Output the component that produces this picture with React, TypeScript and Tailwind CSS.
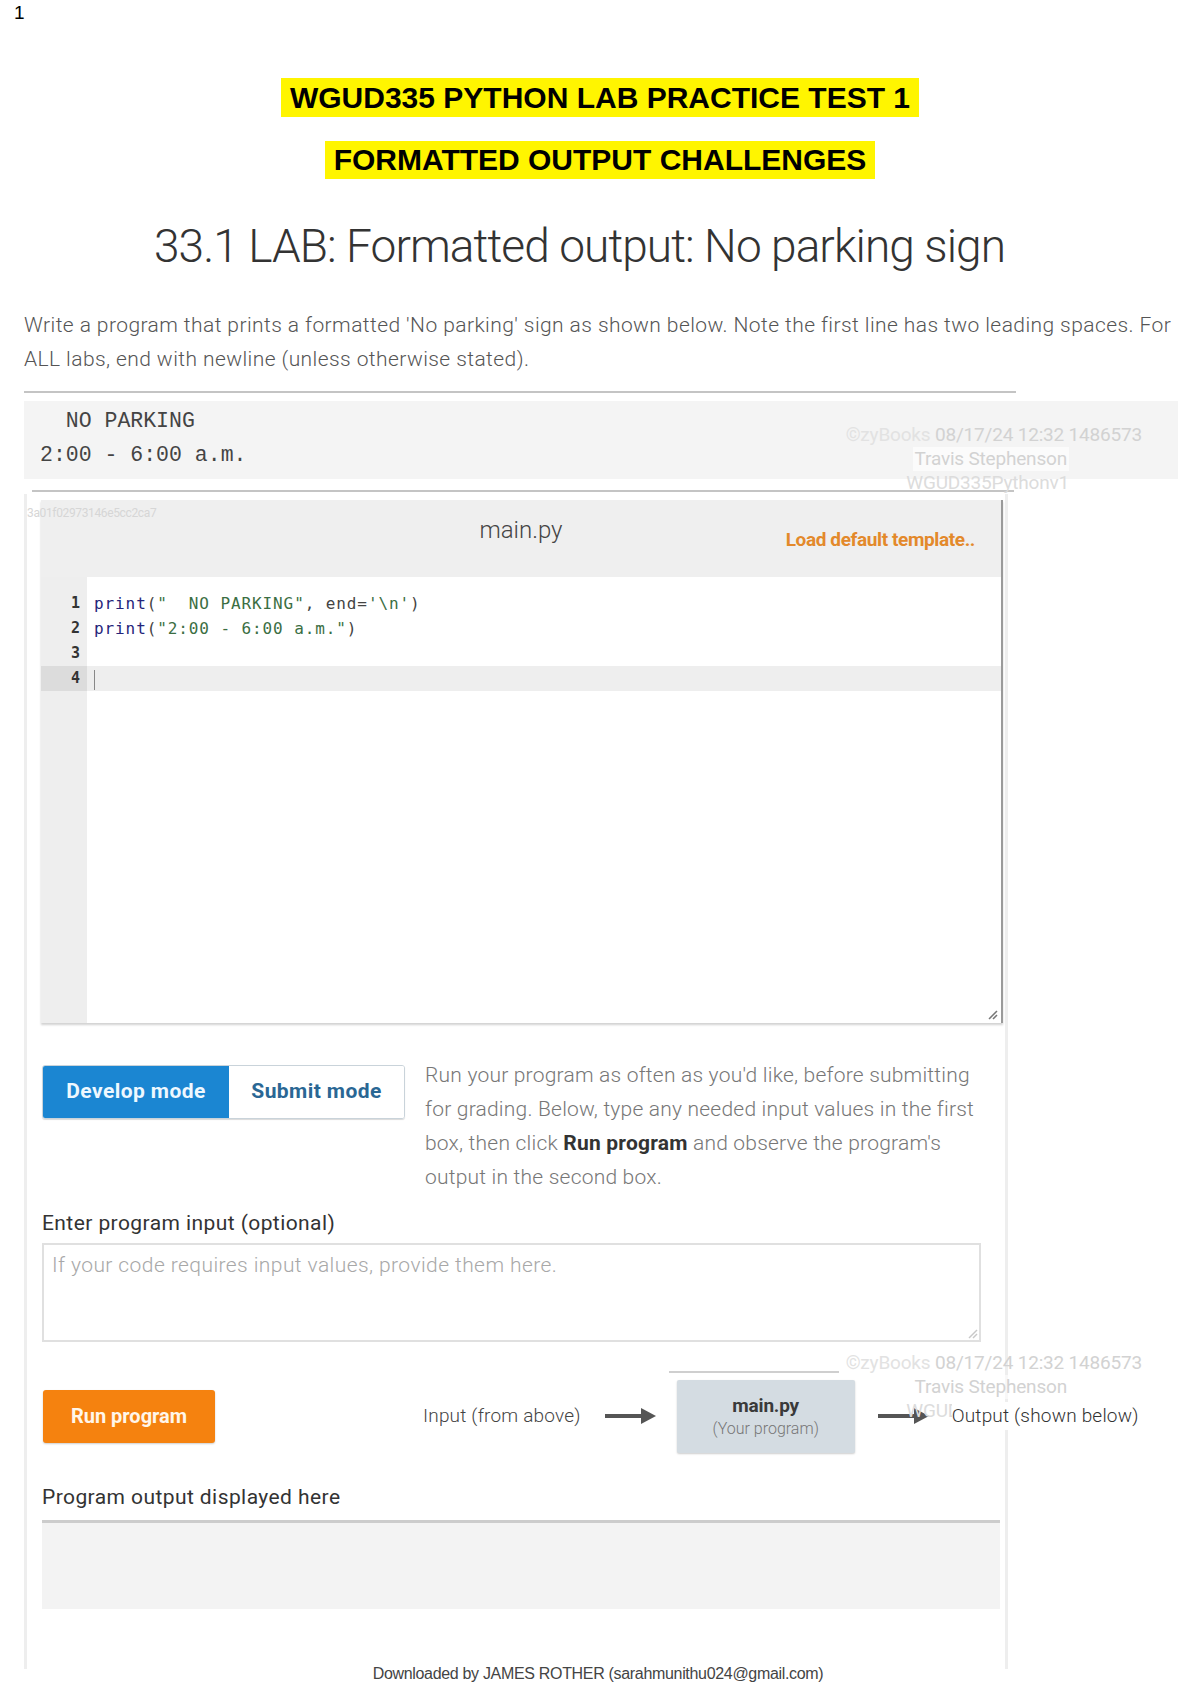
import React from "react";

function Arrow() {
  return (
    <svg width="52" height="20" viewBox="0 0 52 20" className="shrink-0">
      <line x1="0" y1="10" x2="38" y2="10" stroke="#555" strokeWidth="4" />
      <polygon points="36,2 51,10 36,18" fill="#555" />
    </svg>
  );
}

function ResizeGrip() {
  return (
    <svg width="12" height="12" viewBox="0 0 12 12">
      <line x1="11" y1="3" x2="3" y2="11" stroke="#777" strokeWidth="1.5" />
      <line x1="11" y1="7" x2="7" y2="11" stroke="#777" strokeWidth="1.5" />
    </svg>
  );
}

function Watermark({ top }: { top: number }) {
  // zyBooks overlay stamp; only the top offset differs between the two copies
  return (
    <div
      className="absolute left-[836px] w-[306px] flex flex-col items-end pointer-events-none text-[19px] leading-[24px] tracking-[-0.01em] text-[#d2d2d2] font-['Roboto',sans-serif]"
      style={{ top }}
    >
      <div className="whitespace-nowrap">
        <span className="text-[#e2e2e2]">©zyBooks</span> 08/17/24 12:32 1486573
      </div>
      <div className="whitespace-nowrap mr-[73px] bg-white/60 px-[2px]">Travis Stephenson</div>
      <div className="whitespace-nowrap mr-[73px] text-[#dcdcdc]">WGUD335Pythonv1</div>
    </div>
  );
}

const code = [
  <>
    <span className="text-[#25257a]">print</span>(<span className="text-[#3b6e43]">"  NO PARKING"</span>, end=
    <span className="text-[#3b6e43]">'\n'</span>)
  </>,
  <>
    <span className="text-[#25257a]">print</span>(<span className="text-[#3b6e43]">"2:00 - 6:00 a.m."</span>)
  </>,
  <></>,
  <></>,
];

export default function App() {
  return (
    <div className="relative w-[1200px] h-[1700px] bg-white overflow-hidden font-['Roboto',sans-serif] text-[#333]">
      {/* page number */}
      <div className="h-[24px] pl-[14px] pt-[3px] text-[19px] leading-[20px] text-black font-['Liberation_Sans',Arial,sans-serif]">
        1
      </div>

      {/* yellow banners */}
      <div className="mt-[54px] flex flex-col items-center gap-[24px] font-['Liberation_Sans',Arial,sans-serif] font-bold text-black">
        <div className="bg-[#fff500] h-[39px] px-[9px] flex items-center text-[30px] leading-none whitespace-nowrap">
          WGUD335 PYTHON LAB PRACTICE TEST 1
        </div>
        <div className="bg-[#fff500] h-[38px] px-[9px] flex items-center text-[30px] leading-none whitespace-nowrap">
          FORMATTED OUTPUT CHALLENGES
        </div>
      </div>

      {/* title */}
      <h1 className="mt-[39px] pl-[154px] h-[56px] text-[46px] leading-[56px] font-light tracking-[-0.02em] text-[#333] whitespace-nowrap">
        33.1 LAB: Formatted output: No parking sign
      </h1>

      {/* instructions */}
      <p className="mt-[34px] pl-[24px] text-[21px] leading-[34px] font-light text-[#555] tracking-[0.02em] whitespace-nowrap">
        Write a program that prints a formatted 'No parking' sign as shown below. Note the first line has two leading spaces. For
        <br />
        ALL labs, end with newline (unless otherwise stated).
      </p>

      {/* expected output sample */}
      <div className="mt-[15px] ml-[24px] w-[992px] h-[2px] bg-[#c4c4c4]" />
      <div className="mt-[8px] ml-[24px] w-[1154px] h-[78px] bg-[#f4f4f4] pt-[3px] pl-[16px] font-['Liberation_Mono','Courier_New',monospace] text-[21.5px] leading-[34px] text-[#444] whitespace-pre">
        <div>{"  NO PARKING"}</div>
        <div>2:00 - 6:00 a.m.</div>
      </div>
      <div className="mt-[11px] ml-[32px] w-[982px] h-[2px] bg-[#c4c4c4]" />

      <Watermark top={423} />

      {/* lab card */}
      <div className="relative mt-[2px] ml-[24px] w-[984px] h-[1175px] border-x-[3px] border-[#eeeeee] pl-[14px] pr-[2px] pt-[6px]">
        <div className="absolute left-0 top-[12px] text-[12px] leading-[14px] text-[#d6d6d6] tracking-[-0.03em]">
          3a01f02973146e5cc2ca7
        </div>

        {/* editor */}
        <div className="w-[962px] border-r-2 border-[#9a9a9a] shadow-[0_2px_2px_rgba(0,0,0,0.18)]">
          <div className="h-[77px] bg-[#efefef] grid grid-cols-[1fr_auto_1fr]">
            <div />
            <div className="pt-[15px] text-[24px] leading-[30px] font-light text-[#444]">main.py</div>
            <div className="flex justify-end pr-[26px]">
              <span className="mt-[27px] text-[19px] leading-[26px] font-bold tracking-[-0.02em] text-[#e3892b] whitespace-nowrap">
                Load default template..
              </span>
            </div>
          </div>
          <div className="relative h-[446px] flex bg-white">
            <div className="w-[46px] shrink-0 bg-[#eeeeee] pt-[14px]">
              {code.map((_, i) => (
                <div
                  key={i}
                  className={`h-[25px] leading-[25px] pr-[7px] text-right font-['DejaVu_Sans_Mono',monospace] text-[15px] font-bold text-[#333] ${i === 3 ? "bg-[#dcdcdc]" : ""}`}
                >
                  {i + 1}
                </div>
              ))}
            </div>
            <div className="flex-1 pt-[14px]">
              {code.map((c, i) => (
                <div
                  key={i}
                  className={`h-[25px] leading-[25px] pl-[7px] font-['DejaVu_Sans_Mono',monospace] text-[16px] tracking-[0.9px] text-[#444] whitespace-pre ${i === 3 ? "bg-[#eeeeee]" : ""}`}
                >
                  {i === 3 ? <span className="inline-block w-[1px] h-[20px] bg-[#888] align-middle" /> : c}
                </div>
              ))}
            </div>
            <div className="absolute right-[3px] bottom-[3px]">
              <ResizeGrip />
            </div>
          </div>
        </div>

        {/* mode toggle + help */}
        <div className="mt-[35px] flex items-start">
          <div className="mt-[7px] ml-[1px] shrink-0 flex h-[54px] rounded-[3px] overflow-hidden border border-[#c9d3da] shadow-[0_1px_1px_rgba(0,0,0,0.15)]">
            <div className="w-[186px] bg-[#1b86d2] text-[#eef8ff] font-bold text-[21px] tracking-[0.02em] flex items-center justify-center whitespace-nowrap">
              Develop mode
            </div>
            <div className="w-[175px] bg-white text-[#2a6794] font-bold text-[21px] tracking-[0.02em] flex items-center justify-center whitespace-nowrap">
              Submit mode
            </div>
          </div>
          <p className="ml-[20px] text-[21px] leading-[34px] font-light text-[#777] tracking-[0.01em] whitespace-nowrap">
            Run your program as often as you'd like, before submitting
            <br />
            for grading. Below, type any needed input values in the first
            <br />
            box, then click <b className="font-bold text-[#333]">Run program</b> and observe the program's
            <br />
            output in the second box.
          </p>
        </div>

        {/* program input */}
        <div className="mt-[15px] ml-[1px] text-[21px] leading-[28px] text-[#333] tracking-[0.02em]">
          Enter program input (optional)
        </div>
        <div className="relative mt-[6px] ml-[1px] w-[939px] h-[99px] border-2 border-[#e0e0e0] px-[8px] pt-[6px] text-[21px] leading-[28px] font-light text-[#a8a8a8] tracking-[0.02em]">
          If your code requires input values, provide them here.
          <div className="absolute right-[1px] bottom-[1px] opacity-40">
            <ResizeGrip />
          </div>
        </div>

        {/* run row */}
        <div className="mt-[29px] flex items-center">
          <div className="mt-[8px] ml-[2px] shrink-0 w-[172px] h-[53px] rounded-[3px] bg-[#f5820f] text-[#fff6ea] font-bold text-[20px] tracking-[0em] flex items-center justify-center whitespace-nowrap shadow-[0_1px_2px_rgba(0,0,0,0.2)]">
            Run program
          </div>
          <div className="mt-[8px] ml-[208px] shrink-0 text-[19px] font-light text-[#444] tracking-[0.01em] whitespace-nowrap">
            Input (from above)
          </div>
          <div className="mt-[8px] ml-[24px] shrink-0">
            <Arrow />
          </div>
          <div className="ml-[12px] shrink-0 flex flex-col">
            <div className="w-[170px] h-[2px] bg-[#cfcfcf]" />
            <div className="mt-[7px] ml-[8px] w-[178px] h-[73px] rounded-[2px] bg-[#d4dce2] shadow-[0_1px_2px_rgba(0,0,0,0.2)] flex flex-col items-center justify-center">
              <div className="text-[19px] leading-[25px] font-bold text-[#3a3a3a] tracking-[-0.01em]">main.py</div>
              <div className="text-[16px] leading-[22px] font-light text-[#777]">(Your program)</div>
            </div>
          </div>
          <div className="mt-[8px] ml-[23px] shrink-0">
            <Arrow />
          </div>
          <div className="relative z-10 shrink-0 mt-[8px] ml-[22px] bg-white text-[19px] font-light text-[#333] tracking-[0.01em] whitespace-nowrap">
            Output (shown below)
          </div>
        </div>

        {/* output */}
        <div className="mt-[30px] ml-[1px] text-[21px] leading-[28px] text-[#333] tracking-[0.02em]">
          Program output displayed here
        </div>
        <div className="mt-[9px] ml-[1px] w-[958px] h-[89px] border-t-[3px] border-[#cccccc] bg-[#f3f3f3]" />
      </div>

      <Watermark top={1351} />

      {/* footer */}
      <div className="mt-[-4px] text-center pr-[4px] text-[16px] leading-[18px] text-[#444] tracking-[-0.02em] font-['Liberation_Sans',Arial,sans-serif]">
        Downloaded by JAMES ROTHER (sarahmunithu024@gmail.com)
      </div>
    </div>
  );
}
